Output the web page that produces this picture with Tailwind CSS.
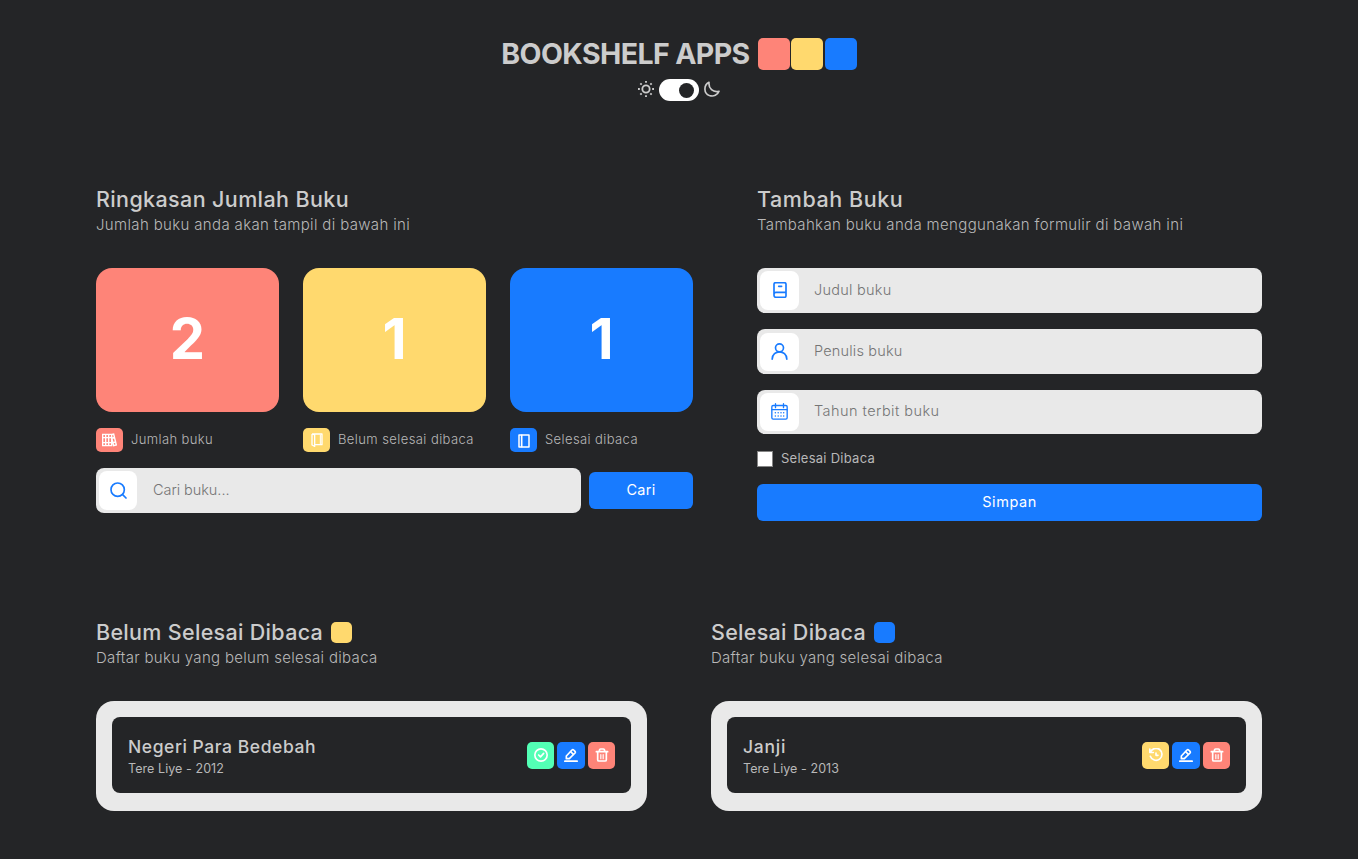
<!DOCTYPE html>
<html lang="id">
<head>
<meta charset="utf-8">
<title>Bookshelf Apps</title>
<script src="https://cdn.jsdelivr.net/npm/@tailwindcss/browser@4"></script>
</head>
<body class="min-h-screen bg-[#242527] font-['Inter',sans-serif] text-[#cccccc]">
<svg class="hidden">
  <symbol id="edit" viewBox="0 0 42 42"><g fill="none" stroke="currentColor" stroke-width="5" stroke-linejoin="round" stroke-linecap="round"><path d="M7 32v-8L24 6q2.500-2.500 5 0l4 4q2 2.500 0 5L16 32z"/><path d="M20 11l8 8M2.500 39.500h37"/></g></symbol>
  <symbol id="trash" viewBox="0 0 42 42"><g fill="none" stroke="currentColor" stroke-linejoin="round" stroke-linecap="round"><path stroke-width="5" d="M4 11h34M8 12v23q0 4 4 4h18q4 0 4-4V12M13 10q0-7 4-7h8q4 0 4 7"/><path stroke-width="3.500" d="M17.500 20v12M24.500 20v12"/></g></symbol>
  <symbol id="check" viewBox="0 0 42 42"><g fill="none" stroke="currentColor" stroke-width="5" stroke-linejoin="round" stroke-linecap="round"><circle cx="21" cy="21" r="18.500"/><path d="M14 21l5.500 5.500L29 16"/></g></symbol>
  <symbol id="undo" viewBox="0 0 42 42"><g fill="none" stroke="currentColor" stroke-width="5" stroke-linejoin="round" stroke-linecap="round"><path d="M4 13A18 18 0 1 1 4 25M2.500 3v10.500h10.500"/><path d="M21 15v7h6"/></g></symbol>
</svg>

<header class="flex flex-col items-center pt-[38px]">
  <div class="flex h-8 items-center">
    <h1 class="-mt-px mr-2 text-[28.500px] leading-8 font-bold tracking-[-0.600px] whitespace-nowrap">BOOKSHELF APPS</h1>
    <div class="flex gap-[1.500px]">
      <span class="size-8 rounded-[5px] bg-[#fe8478]"></span><span class="size-8 rounded-[5px] bg-[#ffd96e]"></span><span class="size-8 rounded-[5px] bg-[#187bff]"></span>
    </div>
  </div>
  <div class="mt-[9px] flex h-[22px] items-center gap-[5px]">
    <svg class="-mt-0.5 size-4" viewBox="0 0 48 48" fill="none" stroke="#ccc" stroke-width="5.500"><circle cx="24" cy="24" r="11"/><path stroke-width="5.500" d="M24 0v5.500M24 42.500V48M0 24h5.500M42.500 24H48M7 7l4 4M37 37l4 4M41 7l-4 4M11 37l-4 4"/></svg>
    <span class="flex h-[22px] w-10 items-center justify-end rounded-full bg-white pr-[5px]"><i class="size-[15px] rounded-full bg-[#242527]"></i></span>
    <svg class="-mt-0.5 size-4" viewBox="0 0 48 48" fill="none" stroke="#ccc" stroke-width="5" stroke-linejoin="round"><path d="M15 4C-2 13-1 37 16 43.500 29 48 41 42 45 31 27 35 13 23 15 4z"/></svg>
  </div>
</header>

<main class="px-24 pt-[83px]">
  <div class="flex gap-16">
    <section class="w-[597px]">
      <h2 class="h-[30px] text-[21.500px] leading-[31px] font-medium tracking-[0.380px]">Ringkasan Jumlah Buku</h2>
      <p class="h-[22px] text-[15px] leading-[22px] font-light tracking-[0.350px] text-[#b8b8b8]">Jumlah buku anda akan tampil di bawah ini</p>
      <div class="mt-8 grid grid-cols-3 gap-6">
        <div>
          <div class="flex h-36 items-center justify-center rounded-2xl bg-[#fe8478] pb-[3px] text-[56px] font-bold text-white">2</div>
          <div class="mt-4 flex h-6 items-center gap-2"><span class="flex h-6 w-[27px] items-center justify-center rounded-[5px] bg-[#fe8478]"><svg class="h-[14px] w-[15px]" viewBox="0 0 45 42" fill="none" stroke="#fff" stroke-width="4.200"><path d="M2 4h27v34H2zM11 4v34M20 4v34M2 14h27M2 29h27M29 4l6-1 8 33-8 2-7-28M31 15l7-2M34 29l6-2"/></svg></span><span class="text-[13px] font-light tracking-[0.380px] text-[#b8b8b8]">Jumlah buku</span></div>
        </div>
        <div>
          <div class="flex h-36 items-center justify-center rounded-2xl bg-[#ffd96e] pb-[3px] text-[56px] font-bold text-white">1</div>
          <div class="mt-4 flex h-6 items-center gap-2"><span class="flex h-6 w-[27px] items-center justify-center rounded-[5px] bg-[#ffd96e]"><svg class="h-[14px] w-3" viewBox="0 0 36 42" fill="none" stroke="#fff" stroke-width="4" stroke-linejoin="round"><path d="M3 3h30v32H12M3 3v33l8 4V6L3 3"/><path stroke-width="3" d="M28 5v28"/></svg></span><span class="text-[13px] font-light tracking-[0.420px] whitespace-nowrap text-[#b8b8b8]">Belum selesai dibaca</span></div>
        </div>
        <div>
          <div class="flex h-36 items-center justify-center rounded-2xl bg-[#187bff] pb-[3px] text-[56px] font-bold text-white">1</div>
          <div class="mt-4 flex h-6 items-center gap-2"><span class="flex h-6 w-[27px] items-center justify-center rounded-[5px] bg-[#187bff]"><svg class="mt-px h-[14px] w-3" viewBox="0 0 36 42" fill="none" stroke="#fff" stroke-width="4.500" stroke-linejoin="round"><path d="M3 3h30v36H3z"/><path stroke-width="5" d="M11 2v38"/></svg></span><span class="text-[13px] font-light tracking-[0.400px] text-[#b8b8b8]">Selesai dibaca</span></div>
        </div>
      </div>
      <form class="mt-4 flex items-center gap-2">
        <div class="flex h-[45px] w-[485px] items-center rounded-lg bg-[#e9e9e9] pl-[3px] text-[#757575]">
          <span class="flex h-[39px] w-[38px] items-center justify-center rounded-lg bg-white"><svg class="size-[17px]" viewBox="0 0 51 51" fill="none" stroke="#187bff" stroke-width="5" stroke-linecap="round"><circle cx="23" cy="23" r="20"/><path d="M38 38l10 10"/></svg></span>
          <span class="ml-4 pb-0.5 text-[14.500px] font-light tracking-[-0.050px]">Cari buku...</span>
        </div>
        <button type="button" class="h-[37px] w-[104px] rounded-md bg-[#187bff] pb-0.5 text-[14.500px] tracking-[0.270px] text-white">Cari</button>
      </form>
    </section>

    <section class="w-[505px]">
      <h2 class="h-[30px] text-[21.500px] leading-[31px] font-medium tracking-[0.550px]">Tambah Buku</h2>
      <p class="h-[22px] text-[15px] leading-[22px] font-light tracking-[0.350px] text-[#b8b8b8]">Tambahkan buku anda menggunakan formulir di bawah ini</p>
      <div class="mt-8 flex flex-col gap-4 text-[14.500px] font-light text-[#757575]">
        <div class="flex h-[45px] items-center rounded-lg bg-[#e9e9e9] pl-[3px]"><span class="flex size-[39px] items-center justify-center rounded-lg bg-white"><svg class="-mt-px size-4" viewBox="0 0 48 48" fill="none" stroke="#187bff" stroke-width="5" stroke-linejoin="round" stroke-linecap="round"><path d="M42 31V7q0-5-5-5H11q-5 0-5 5v33q0 6 6 6h25q5 0 5-5V31H12q-6 0-6 6M20 13h9"/></svg></span><span class="ml-[15px] pb-0.5 tracking-[0.250px]">Judul buku</span></div>
        <div class="flex h-[45px] items-center rounded-lg bg-[#e9e9e9] pl-[3px]"><span class="flex h-[38px] w-[39px] items-center justify-center rounded-lg bg-white"><svg class="size-[17px]" viewBox="0 0 51 51" fill="none" stroke="#187bff" stroke-width="5" stroke-linecap="round"><circle cx="25.500" cy="14.500" r="12"/><path d="M3.500 48.500C4 19 47 19 47.500 48.500"/></svg></span><span class="ml-[15px] pb-0.5 tracking-[0.190px]">Penulis buku</span></div>
        <div class="flex h-11 items-center rounded-lg bg-[#e9e9e9] pl-[3px]"><span class="flex h-[38px] w-[39px] items-center justify-center rounded-lg bg-white"><svg class="-mt-px size-[17px]" viewBox="0 0 51 51" fill="none" stroke="#187bff" stroke-width="4" stroke-linecap="round"><rect x="2.500" y="7.500" width="46" height="41" rx="4"/><path d="M3 20h45M13.500 2v12M37.500 2v12"/><path stroke-width="4.500" d="M13 29h.1M21.500 29h.1M30 29h.1M38 29h.1M13 39h.1M21.500 39h.1M30 39h.1M38 39h.1"/></svg></span><span class="ml-[15px] pb-0.5 tracking-[0.460px]">Tahun terbit buku</span></div>
      </div>
      <label class="mt-[17px] flex h-4 items-center gap-2 text-[13px] tracking-[0.260px] text-[#b8b8b8]"><span class="size-4 border border-[#858585] bg-white"></span>Selesai Dibaca</label>
      <button type="button" class="mt-[17px] block h-[37px] w-full rounded-md bg-[#187bff] pb-0.5 text-[14.500px] tracking-[0.540px] text-white">Simpan</button>
    </section>
  </div>

  <div class="mt-24 grid grid-cols-2 gap-16">
    <section>
      <h2 class="flex h-[30px] items-center gap-2 text-[21.500px] leading-[31px] font-medium tracking-[0.310px]">Belum Selesai Dibaca<span class="size-[21px] rounded-[5px] bg-[#ffd96e]"></span></h2>
      <p class="h-[22px] text-[15px] leading-[22px] font-light tracking-[0.310px] text-[#b8b8b8]">Daftar buku yang belum selesai dibaca</p>
      <div class="mt-8 h-[110px] rounded-[18px] bg-[#e9e9e9] p-4">
        <article class="flex h-19 items-center justify-between rounded-lg bg-[#242527] px-4">
          <div><h3 class="pt-px text-[17.500px] leading-[25px] font-medium tracking-[0.560px]">Negeri Para Bedebah</h3><p class="text-[12.500px] leading-[19px] tracking-[0.070px] text-[#b8b8b8]">Tere Liye - 2012</p></div>
          <div class="flex gap-[3px] text-white">
            <button class="flex size-[27px] items-center justify-center rounded-[5px] bg-[#53ffb5]"><svg class="size-[14px]"><use href="#check"/></svg></button>
            <button class="flex h-[27px] w-7 items-center justify-center rounded-[5px] bg-[#187bff]"><svg class="size-[14px]"><use href="#edit"/></svg></button>
            <button class="flex size-[27px] items-center justify-center rounded-[5px] bg-[#fe8478]"><svg class="size-[14px]"><use href="#trash"/></svg></button>
          </div>
        </article>
      </div>
    </section>
    <section>
      <h2 class="flex h-[30px] items-center gap-2 text-[21.500px] leading-[31px] font-medium tracking-[0.290px]">Selesai Dibaca<span class="size-[21px] rounded-[5px] bg-[#187bff]"></span></h2>
      <p class="h-[22px] text-[15px] leading-[22px] font-light tracking-[0.290px] text-[#b8b8b8]">Daftar buku yang selesai dibaca</p>
      <div class="mt-8 h-[110px] rounded-[18px] bg-[#e9e9e9] p-4">
        <article class="flex h-19 items-center justify-between rounded-lg bg-[#242527] px-4">
          <div><h3 class="pt-px text-[17.500px] leading-[25px] font-medium tracking-[0.740px]">Janji</h3><p class="text-[12.500px] leading-[19px] tracking-[0.070px] text-[#b8b8b8]">Tere Liye - 2013</p></div>
          <div class="flex gap-[3px] text-white">
            <button class="flex size-[27px] items-center justify-center rounded-[5px] bg-[#ffd96e]"><svg class="size-[14px]"><use href="#undo"/></svg></button>
            <button class="flex h-[27px] w-7 items-center justify-center rounded-[5px] bg-[#187bff]"><svg class="size-[14px]"><use href="#edit"/></svg></button>
            <button class="flex size-[27px] items-center justify-center rounded-[5px] bg-[#fe8478]"><svg class="size-[14px]"><use href="#trash"/></svg></button>
          </div>
        </article>
      </div>
    </section>
  </div>
</main>
</body>
</html>
